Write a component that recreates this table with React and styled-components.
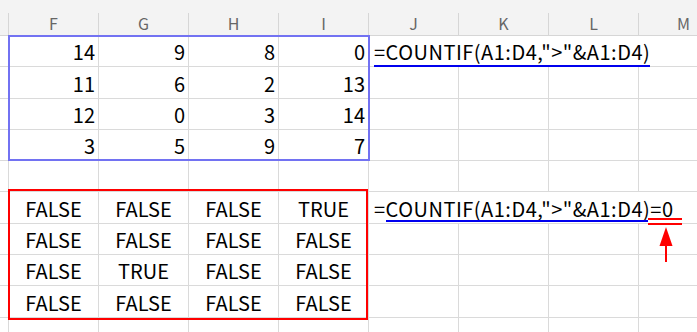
import React from "react";
import styled, { createGlobalStyle } from "styled-components";

const GlobalStyle = createGlobalStyle`
  html, body {
    margin: 0;
    padding: 0;
    background: #ffffff;
    overflow: hidden;
  }
  body {
    font-family: "Noto Sans CJK JP", "Noto Sans", sans-serif;
  }
`;

const Sheet = styled.div`
  position: relative;
  width: 697px;
  height: 332px;
  overflow: hidden;
  background: #ffffff;
`;

const HeaderRow = styled.div`
  display: grid;
  grid-template-columns: 9px repeat(8, 90px);
  height: 36px;
  padding-top: 13px;
  box-sizing: border-box;
  background: #f3f3f3;
  border-bottom: 1px solid #d6d6d6;
`;

const HeaderCell = styled.div`
  display: flex;
  align-items: center;
  justify-content: center;
  border-right: 1px solid #d6d6d6;
  color: #666666;
  font-size: 16px;
  line-height: 1;
  padding-bottom: 2px;
`;

const Row = styled.div`
  display: grid;
  grid-template-columns: 9px repeat(8, 90px);
  height: ${({ $h }) => $h}px;
`;

const Cell = styled.div`
  box-sizing: border-box;
  display: flex;
  align-items: center;
  justify-content: ${({ $align }) =>
    $align === "right" ? "flex-end" : $align === "center" ? "center" : "flex-start"};
  padding: 1px ${({ $align }) => ($align === "center" ? 0 : 3)}px 0 0;
  border-right: 1px solid #dadada;
  border-bottom: 1px solid #dadada;
  font-size: 20px;
  color: #000000;
  white-space: nowrap;
`;

const FormulaCell = styled.div`
  grid-column: 6 / -1;
  box-sizing: border-box;
  display: flex;
  align-items: stretch;
  padding: 1px 0 0 5px;
  border-bottom: 1px solid #dadada;
  font-size: 20px;
  letter-spacing: 0.5px;
  color: #000000;
  white-space: nowrap;
  position: relative;
  z-index: 2;
`;

const Text = styled.span`
  display: flex;
  align-items: center;
  position: relative;
`;

const Underlined = styled(Text)`
  &::after {
    content: "";
    position: absolute;
    left: 0;
    right: ${({ $right }) => $right || 0}px;
    bottom: ${({ $bottom }) => $bottom}px;
    height: 2px;
    background: #0000ee;
  }
`;

const Mark = styled(Text)`
  padding-right: 8px;
  &::before,
  &::after {
    content: "";
    position: absolute;
    left: -2px;
    right: 0;
    height: 2px;
    background: #ff0000;
  }
  &::before {
    bottom: 3px;
  }
  &::after {
    bottom: -2px;
  }
`;

const Arrow = styled.svg`
  position: absolute;
  top: calc(100% + 4px);
  left: 50%;
  transform: translateX(-50%);
  overflow: visible;
`;

const RangeBox = styled.div`
  position: absolute;
  left: ${({ $x }) => $x}px;
  top: ${({ $y }) => $y}px;
  width: ${({ $w }) => $w}px;
  height: ${({ $h }) => $h}px;
  box-sizing: border-box;
  border: 2px solid ${({ $color }) => $color};
  pointer-events: none;
  z-index: 3;
`;

const columns = ["", "F", "G", "H", "I", "J", "K", "L", "M"];
const rowHeights = [31, 32, 31, 31, 31, 32, 31, 31, 32, 20];

const numbers = [
  [14, 9, 8, 0],
  [11, 6, 2, 13],
  [12, 0, 3, 14],
  [3, 5, 9, 7],
];

const bools = [
  ["FALSE", "FALSE", "FALSE", "TRUE"],
  ["FALSE", "FALSE", "FALSE", "FALSE"],
  ["FALSE", "TRUE", "FALSE", "FALSE"],
  ["FALSE", "FALSE", "FALSE", "FALSE"],
];

const formula = '=COUNTIF(A1:D4,">"&A1:D4)';

const rowValues = (r) => {
  if (r < 4) return { values: numbers[r], align: "right" };
  if (r >= 5 && r < 9) return { values: bools[r - 5], align: "center" };
  return { values: ["", "", "", ""], align: "right" };
};

const renderFormula = (r) => {
  if (r === 0) {
    return (
      <FormulaCell>
        <Underlined $bottom={-1} $right={0}>{formula}</Underlined>
      </FormulaCell>
    );
  }
  if (r === 5) {
    return (
      <FormulaCell>
        <Text>=</Text>
        <Underlined $bottom={1} $right={2}>
          {formula.slice(1)}
        </Underlined>
        <Mark>
          =0
          <Arrow width="14" height="36" viewBox="0 0 14 36">
            <polygon points="7,0 0.5,19 13.5,19" fill="#ff0000" />
            <rect x="6" y="18" width="2" height="17" fill="#ff0000" />
          </Arrow>
        </Mark>
      </FormulaCell>
    );
  }
  return [5, 6, 7, 8].map((c) => <Cell key={c} />);
};

const App = () => (
  <>
    <GlobalStyle />
    <Sheet>
      <HeaderRow>
        {columns.map((c, i) => (
          <HeaderCell key={i}>{c}</HeaderCell>
        ))}
      </HeaderRow>
      {rowHeights.map((h, r) => {
        const { values, align } = rowValues(r);
        return (
          <Row key={r} $h={h}>
            <Cell />
            {values.map((v, c) => (
              <Cell key={c} $align={align}>
                {v}
              </Cell>
            ))}
            {renderFormula(r)}
          </Row>
        );
      })}
      <RangeBox $x={8} $y={35} $w={362} $h={126} $color="#7272f2" />
      <RangeBox $x={8} $y={189} $w={360} $h={131} $color="#ff0000" />
    </Sheet>
  </>
);

export default App;
